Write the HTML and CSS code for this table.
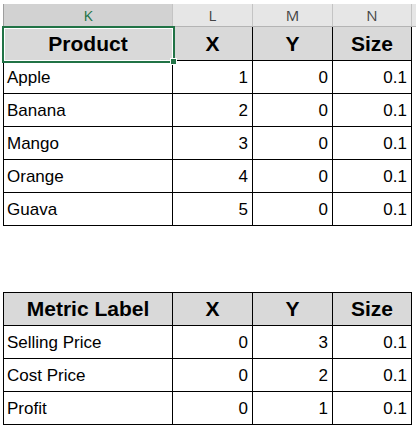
FILE: index.html
```html
<!DOCTYPE html>
<html>
<head>
<meta charset="utf-8">
<link rel="stylesheet" href="styles.css">
</head>
<body>
<div class="sheet">
  <div class="colheads">
    <div class="ch sel">K</div>
    <div class="ch">L</div>
    <div class="ch">M</div>
    <div class="ch">N</div>
    <div class="ch rest"></div>
  </div>

  <div class="grid t1">
    <div class="c h">Product</div><div class="c h">X</div><div class="c h">Y</div><div class="c h">Size</div>
    <div class="c">Apple</div><div class="c n">1</div><div class="c n">0</div><div class="c n">0.1</div>
    <div class="c">Banana</div><div class="c n">2</div><div class="c n">0</div><div class="c n">0.1</div>
    <div class="c">Mango</div><div class="c n">3</div><div class="c n">0</div><div class="c n">0.1</div>
    <div class="c">Orange</div><div class="c n">4</div><div class="c n">0</div><div class="c n">0.1</div>
    <div class="c">Guava</div><div class="c n">5</div><div class="c n">0</div><div class="c n">0.1</div>
  </div>

  <div class="grid t2">
    <div class="c h">Metric Label</div><div class="c h">X</div><div class="c h">Y</div><div class="c h">Size</div>
    <div class="c">Selling Price</div><div class="c n">0</div><div class="c n">3</div><div class="c n">0.1</div>
    <div class="c">Cost Price</div><div class="c n">0</div><div class="c n">2</div><div class="c n">0.1</div>
    <div class="c">Profit</div><div class="c n">0</div><div class="c n">1</div><div class="c n">0.1</div>
  </div>

  <div class="selection"><div class="handle"></div></div>
</div>
</body>
</html>
```

FILE: styles.css
```css
html, body {
  margin: 0;
  padding: 0;
  background: #ffffff;
}

.sheet {
  position: relative;
  width: 416px;
  height: 427px;
  padding-top: 4px;
  box-sizing: border-box;
  font-family: "Liberation Sans", Arial, sans-serif;
  color: #000;
}

.colheads {
  display: flex;
  margin-left: 3px;
  height: 23px;
  border-left: 1px solid #9e9e9e;
  border-bottom: 1px solid #b4b4b4;
  background: #e6e6e6;
  box-sizing: border-box;
}

.ch {
  box-sizing: border-box;
  border-right: 1px solid #c4c4c4;
  font-family: "Open Sans", "DejaVu Sans", sans-serif;
  font-size: 15px;
  line-height: 22px;
  text-align: center;
  color: #444;
}
.ch:nth-child(1) { width: 169px; }
.ch:nth-child(2) { width: 80px; }
.ch:nth-child(3) { width: 80px; }
.ch:nth-child(4) { width: 79px; }
.ch.rest { flex: 1; border-right: none; }
.ch.sel {
  background: #d2d2d2;
  color: #217346;
}

.grid {
  display: grid;
  grid-template-columns: 169px 80px 80px 79px;
  margin-left: 3px;
  width: 409px;
  border-left: 1px solid #000;
  box-sizing: border-box;
}
.t2 {
  margin-top: 66px;
  border-top: 1px solid #000;
}

.c {
  box-sizing: border-box;
  height: 33px;
  border-right: 1px solid #000;
  border-bottom: 1px solid #000;
  font-size: 17px;
  line-height: 32px;
  padding-top: 1px;
  padding-left: 3px;
  white-space: nowrap;
  overflow: hidden;
}
.c.n {
  text-align: right;
  padding-right: 4px;
  padding-left: 0;
}
.c.h {
  background: #d9d9d9;
  font-weight: bold;
  font-size: 21px;
  text-align: center;
  padding-left: 0;
  padding-top: 0;
}
.t1 .c.h {
  height: 34px;
  line-height: 33px;
}

.selection {
  position: absolute;
  left: 2px;
  top: 26px;
  width: 173px;
  height: 37px;
  box-sizing: border-box;
  border: 2px solid #217346;
  box-shadow: inset 0 0 0 1px #ffffff;
}
.handle {
  position: absolute;
  right: -3px;
  bottom: -3px;
  width: 5px;
  height: 5px;
  background: #217346;
  box-shadow: 0 0 0 1px #ffffff;
}
```
